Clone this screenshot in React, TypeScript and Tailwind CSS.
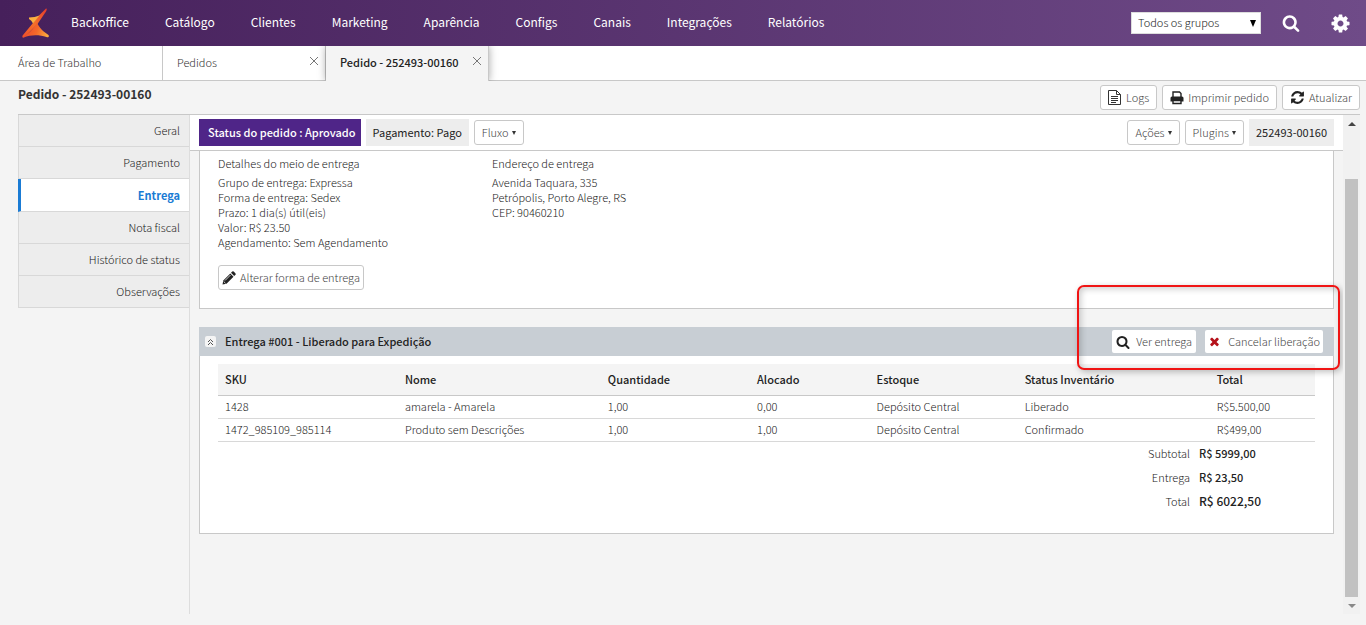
import type { ReactNode } from "react";

const navItems = [
  "Backoffice",
  "Catálogo",
  "Clientes",
  "Marketing",
  "Aparência",
  "Configs",
  "Canais",
  "Integrações",
  "Relatórios"
];

const sections = ["Geral", "Pagamento", "Entrega", "Nota fiscal", "Histórico de status", "Observações"];

const columns = [
  { label: "SKU", width: "w-[16.4%]" },
  { label: "Nome", width: "w-[18.5%]" },
  { label: "Quantidade", width: "w-[13.6%]" },
  { label: "Alocado", width: "w-[10.9%]" },
  { label: "Estoque", width: "w-[13.5%]" },
  { label: "Status Inventário", width: "w-[17.5%]" },
  { label: "Total", width: "" }
];

const rows = [
  ["1428", "amarela - Amarela", "1,00", "0,00", "Depósito Central", "Liberado", "R$5.500,00"],
  ["1472_985109_985114", "Produto sem Descrições", "1,00", "1,00", "Depósito Central", "Confirmado", "R$499,00"]
];

const icons = {
  search:
    "M1216 832q0-185-131.5-316.5t-316.5-131.5-316.5 131.5-131.5 316.5 131.5 316.5 316.5 131.5 316.5-131.5 131.5-316.5zm512 832q0 52-38 90t-90 38q-54 0-90-38l-343-342q-179 124-399 124-143 0-273.5-55.5t-225-150-150-225-55.5-273.5 55.5-273.5 150-225 225-150 273.5-55.5 273.5 55.5 225 150 150 225 55.5 273.5q0 220-124 399l343 343q37 37 37 90z",
  cog: "M1152 896q0-106-75-181t-181-75-181 75-75 181 75 181 181 75 181-75 75-181zm512-109v222q0 12-8 23t-20 13l-185 28q-19 54-39 91 35 50 107 138 10 12 10 25t-9 23q-27 37-99 108t-94 71q-12 0-26-9l-138-108q-44 23-91 38-16 136-29 186-7 28-36 28h-222q-14 0-24.5-8.5t-11.5-21.5l-28-184q-49-16-90-37l-141 107q-10 9-25 9-14 0-25-11-126-114-165-168-7-10-7-23 0-12 8-23 15-21 51-66.5t54-70.5q-27-50-41-99l-183-27q-13-2-21-12.5t-8-23.5v-222q0-12 8-23t19-13l186-28q14-46 39-92-40-57-107-138-10-12-10-24 0-10 9-23 26-36 98.5-107.5t94.5-71.5q13 0 26 10l138 107q44-23 91-38 16-136 29-186 7-28 36-28h222q14 0 24.5 8.5t11.5 21.5l28 184q49 16 90 37l142-107q9-9 24-9 13 0 25 10 129 119 165 170 7 8 7 22 0 12-8 23-15 21-51 66.5t-54 70.5q26 50 41 98l183 28q13 2 21 12.5t8 23.5z",
  times:
    "M1490 1322q0 40-28 68l-136 136q-28 28-68 28t-68-28l-294-294-294 294q-28 28-68 28t-68-28l-136-136q-28-28-28-68t28-68l294-294-294-294q-28-28-28-68t28-68l136-136q28-28 68-28t68 28l294 294 294-294q28-28 68-28t68 28l136 136q28 28 28 68t-28 68l-294 294 294 294q28 28 28 68z",
  refresh:
    "M1639 1056q0 5-1 7-64 268-268 434.5t-478 166.5q-146 0-282.5-55t-243.5-157l-129 129q-19 19-45 19t-45-19-19-45v-448q0-26 19-45t45-19h448q26 0 45 19t19 45-19 45l-137 137q71 66 161 102t187 36q134 0 250-65t186-179q11-17 53-117 8-23 30-23h192q13 0 22.5 9.5t9.5 22.5zm25-800v448q0 26-19 45t-45 19h-448q-26 0-45-19t-19-45 19-45l138-138q-148-137-349-137-134 0-250 65t-186 179q-11 17-53 117-8 23-30 23h-199q-13 0-22.5-9.5t-9.5-22.5v-7q65-268 270-434.5t480-166.5q146 0 284 55.5t245 156.5l130-129q19-19 45-19t45 19 19 45z"
};

function Icon({ name, className }: { name: keyof typeof icons; className: string }) {
  return (
    <svg viewBox="0 0 1792 1792" fill="currentColor" aria-hidden="true" className={className}>
      <path d={icons[name]} />
    </svg>
  );
}

function Logo() {
  return (
    <svg viewBox="0 0 27 30" aria-hidden="true" className="h-[30px] w-[27px]">
      <defs>
        <linearGradient id="arm" x1="1" y1="0" x2="0" y2="1">
          <stop offset="0" stopColor="#e23a2e" />
          <stop offset="0.5" stopColor="#f5702a" />
          <stop offset="1" stopColor="#f04e2a" />
        </linearGradient>
        <linearGradient id="leg" x1="0" y1="0.6" x2="1" y2="0.8">
          <stop offset="0" stopColor="#ee4a2c" />
          <stop offset="0.5" stopColor="#f4682a" />
          <stop offset="1" stopColor="#fbb040" />
        </linearGradient>
      </defs>
      <path d="M24 0.5C25 0 25 2 24 3.500L15.500 16L2 29.500C0.500 30 0 29 0.600 27.500L11 15Q14 11 17 7.500Z" fill="url(#arm)" />
      <path d="M7 9.500Q13 9.500 17.500 7.500L11 15.500Q9.500 12 7 11Z" fill="#fbb040" />
      <path d="M15 14.500C17 20 22 24 26.500 27C27.500 29 26 29.500 24.500 29C17 26.500 9 26.500 1.500 29.500C5 26 12 21 15 14.500Z" fill="url(#leg)" />
    </svg>
  );
}

function PrintIcon() {
  return (
    <svg viewBox="0 0 14 14" aria-hidden="true" className="size-[14px]">
      <path d="M3 6V1H9.500L11 2.500V6" fill="#fff" stroke="#222" strokeWidth="1.400" />
      <path d="M2 5.500H12Q13.500 5.500 13.500 7V10.500H0.500V7Q0.500 5.500 2 5.500Z" fill="#222" />
      <path d="M3 9.500H11V12.500H3Z" fill="#fff" stroke="#222" strokeWidth="1.400" />
    </svg>
  );
}

function LogIcon() {
  return (
    <svg viewBox="0 0 13 15" aria-hidden="true" fill="none" stroke="#333" className="h-[15px] w-[13px]">
      <path d="M0.500 0.500H8.500L12.500 4.500V14.500H0.500ZM8.500 0.500V4.500H12.500M3 6.500H10M3 8.500H10M3 10.500H10M3 12.500H8" />
    </svg>
  );
}

function PencilIcon() {
  return (
    <svg viewBox="0 0 14 14" aria-hidden="true" fill="#222" className="size-[14px]">
      <path d="M0.500 13.500L1.300 9.500L8.300 2.500L11.500 5.700L4.500 12.700Z" />
      <path d="M9 1.800L10.300 0.500Q11 0 11.700 0.600L13.400 2.300Q14 3 13.500 3.700L12.200 5Z" />
      <path d="M3 9.500L8.500 4M1.700 10.500L3.500 12.300" stroke="#fff" strokeWidth="0.800" />
    </svg>
  );
}

function Button({ icon, children, className = "px-[7px]" }: { icon?: ReactNode; children: ReactNode; className?: string }) {
  return (
    <button
      type="button"
      className={`flex h-[25px] items-center rounded-[3px] border border-[#c8c8c8] bg-white whitespace-nowrap text-[#444] ${className}`}
    >
      {icon}
      {children}
    </button>
  );
}

function Caret() {
  return <span className="ml-[3px] h-0 w-0 border-x-[2px] border-t-[4px] border-x-transparent border-t-[#333]" />;
}

function Tab({ label, active = false, closable = true }: { label: string; active?: boolean; closable?: boolean }) {
  return (
    <div
      className={`flex w-[163px] justify-between border-r border-[#c8c8c8] pr-[6px] ${closable ? "pl-[14px]" : "pl-[18px]"} ${
        active
          ? "relative z-10 bg-[#f4f4f4] font-medium text-[#222] shadow-[0_0_8px_rgba(0,0,0,0.35)] [clip-path:inset(0_-10px_0_-10px)]"
          : "border-b bg-white text-[#333]"
      }`}
    >
      <a href="#" className="leading-[32px]">
        {label}
      </a>
      {closable && (
        <button type="button" aria-label={`Fechar ${label}`} className="mt-[10px] h-[10px] w-[10px]">
          <svg viewBox="0 0 10 10" stroke="#777" className="size-[10px]">
            <path d="M1 1L9 9M9 1L1 9" />
          </svg>
        </button>
      )}
    </div>
  );
}

export default function App() {
  return (
    <div className="flex h-screen flex-col bg-[#f4f4f4] font-['Noto_Sans_CJK_SC',sans-serif] text-[11px] leading-[15px] font-light text-[#222]">
      <header className="flex h-[46px] shrink-0 items-center bg-linear-to-r from-[#46205b] to-[#6f4b88] pr-[15px] pl-[22px] text-white">
        <Logo />
        <nav className="ml-[22px] flex flex-1 gap-[36px] pb-[4px] text-[12px] font-normal">
          {navItems.map((item) => (
            <a key={item} href="#">
              {item}
            </a>
          ))}
        </nav>
        <div className="relative">
          <select
            aria-label="Grupo"
            className="block h-[22px] w-[130px] appearance-none rounded-none border border-[#ddd] bg-white pb-[2px] pl-[6px] text-[11px] leading-[18px] text-[#222]"
          >
            <option>Todos os grupos</option>
          </select>
          <span className="pointer-events-none absolute top-2 right-[5px] h-0 w-0 border-x-[3px] border-t-[7px] border-x-transparent border-t-black" />
        </div>
        <button type="button" aria-label="Buscar" className="ml-[21px]">
          <Icon name="search" className="size-[18px]" />
        </button>
        <button type="button" aria-label="Configurações" className="ml-[30px]">
          <Icon name="cog" className="size-[21px]" />
        </button>
      </header>

      <div className="flex h-[35px] shrink-0 bg-white">
        <Tab label="Área de Trabalho" closable={false} />
        <Tab label="Pedidos" />
        <Tab label="Pedido - 252493-00160" active />
        <div className="flex-1 border-b border-[#c8c8c8]" />
      </div>

      <div className="mr-[6px] ml-[18px] flex h-[34px] shrink-0 items-center justify-between border-b border-[#c8c8c8]">
        <h1 className="pb-2 text-[12px] font-semibold text-[#333]">Pedido - 252493-00160</h1>
        <div className="flex gap-[5px]">
          <Button icon={<LogIcon />} className="gap-[5px] px-[7px]">
            Logs
          </Button>
          <Button icon={<PrintIcon />} className="gap-[4px] px-[7px]">
            Imprimir pedido
          </Button>
          <Button icon={<Icon name="refresh" className="size-[15px] text-[#222]" />} className="gap-[4px] px-[7px]">
            Atualizar
          </Button>
        </div>
      </div>

      <main className="mr-[6px] mb-[11px] ml-[18px] flex min-h-0 flex-1">
        <nav className="w-[172px] shrink-0 border-r border-[#ddd]">
          {sections.map((section) => (
            <a
              key={section}
              href="#"
              className={`block border-b border-[#d8d8d8] pr-[9px] text-right ${
                section === "Entrega"
                  ? "h-[33px] border-l-[3px] border-l-[#1a7bd4] bg-white leading-[32px] font-semibold text-[#1a7bd4]"
                  : "h-[32px] border-l border-l-[#d8d8d8] bg-[#ededed] leading-[31px]"
              }`}
            >
              {section}
            </a>
          ))}
        </nav>

        <div className="flex min-w-0 flex-1 flex-col">
          <div className="flex h-9 shrink-0 items-center gap-[5px] border-b border-[#c8c8c8] bg-white px-[9px]">
            <span className="bg-[#4f2588] pr-[5px] pl-[9px] leading-[27px] font-medium text-white">
              Status do pedido : Aprovado
            </span>
            <span className="bg-[#ededed] px-[7px] leading-[27px] font-normal text-[#222]">Pagamento: Pago</span>
            <Button>
              Fluxo <Caret />
            </Button>
            <div className="flex-1" />
            <Button>
              Ações <Caret />
            </Button>
            <Button>
              Plugins <Caret />
            </Button>
            <span className="bg-[#ededed] px-[7px] leading-[27px] font-normal text-[#222]">252493-00160</span>
          </div>

          <div className="min-h-0 flex-1 overflow-hidden px-[9px]">
            <section className="border border-t-0 border-[#c8c8c8] bg-white px-[18px] pt-[5px] pb-[18px]">
              <div className="flex">
                <div className="w-[274px]">
                  <h2 className="mb-1">Detalhes do meio de entrega</h2>
                  <p>Grupo de entrega: Expressa</p>
                  <p>Forma de entrega: Sedex</p>
                  <p>Prazo: 1 dia(s) útil(eis)</p>
                  <p>Valor: R$ 23.50</p>
                  <p>Agendamento: Sem Agendamento</p>
                </div>
                <div>
                  <h2 className="mb-1">Endereço de entrega</h2>
                  <p>Avenida Taquara, 335</p>
                  <p>Petrópolis, Porto Alegre, RS</p>
                  <p>CEP: 90460210</p>
                </div>
              </div>
              <Button icon={<PencilIcon />} className="mt-[15px] gap-[4px] px-[3px]">
                Alterar forma de entrega
              </Button>
            </section>

            <section className="mt-[18px] border border-t-0 border-[#c8c8c8] bg-white pb-[20px]">
              <div className="relative -mx-px flex h-[29px] items-center bg-[#c8ced4] pr-[11px] pl-[6px]">
                <button
                  type="button"
                  aria-label="Recolher entrega"
                  className="flex size-[11px] items-center justify-center rounded-[2px] bg-[#f4f4f4]"
                >
                  <svg viewBox="0 0 7 8" fill="none" stroke="#555" className="h-2 w-[7px]">
                    <path d="M1 4L3.500 1.500L6 4M1 7L3.500 4.500L6 7" />
                  </svg>
                </button>
                <h2 className="ml-[9px] flex-1 font-medium text-[#222]">Entrega #001 - Liberado para Expedição</h2>
                <div className="flex gap-[9px]">
                  <button type="button" className="flex h-[23px] items-center gap-[6px] rounded-[2px] bg-white px-[4px] text-[#444]">
                    <Icon name="search" className="size-[14px] text-[#222]" />
                    Ver entrega
                  </button>
                  <button type="button" className="flex h-[23px] items-center gap-[7px] rounded-[2px] bg-white px-[3px] text-[#444]">
                    <Icon name="times" className="size-[13px] text-[#b5121b]" />
                    Cancelar liberação
                  </button>
                </div>
                {/* highlight around the delivery actions */}
                <div className="pointer-events-none absolute -top-[42px] -right-[6px] -bottom-[14px] w-[263px] rounded-[7px] border-2 border-[#f01414] shadow-[2px_2px_6px_rgba(0,0,0,0.25),inset_2px_2px_6px_rgba(0,0,0,0.2)]" />
              </div>

              <div className="mx-[18px] mt-[8px]">
                <table className="w-full table-fixed border-collapse text-left">
                  <thead>
                    <tr className="h-[31px] border-b border-[#c8c8c8] bg-[#f4f4f4] text-[#222]">
                      {columns.map((column) => (
                        <th key={column.label} className={`px-[7px] font-medium ${column.width}`}>
                          {column.label}
                        </th>
                      ))}
                    </tr>
                  </thead>
                  <tbody>
                    {rows.map((row) => (
                      <tr key={row[0]} className="h-[23px] border-b border-[#d8d8d8]">
                        {row.map((cell, index) => (
                          <td key={columns[index].label} className="px-[7px]">
                            {cell}
                          </td>
                        ))}
                      </tr>
                    ))}
                  </tbody>
                </table>
                <dl className="-mt-px ml-auto grid w-[185px] grid-cols-[60px_1fr] gap-x-[9px] leading-6">
                  <dt className="text-right">Subtotal</dt>
                  <dd className="font-medium">R$ 5999,00</dd>
                  <dt className="text-right">Entrega</dt>
                  <dd className="font-medium">R$ 23,50</dd>
                  <dt className="text-right">Total</dt>
                  <dd className="text-[12px] font-medium">R$ 6022,50</dd>
                </dl>
              </div>
            </section>
          </div>
        </div>

        <div className="flex w-[17px] shrink-0 flex-col items-center bg-[#f1f1f1]">
          <button type="button" aria-label="Rolar para cima" className="flex h-[17px] w-full items-center justify-center">
            <span className="border-x-4 border-b-4 border-x-transparent border-b-[#444]" />
          </button>
          <div className="mt-[47px] w-[13px] flex-1 bg-[#c1c1c1]" />
          <button type="button" aria-label="Rolar para baixo" className="flex h-[17px] w-full items-center justify-center">
            <span className="border-x-4 border-t-4 border-x-transparent border-t-[#888]" />
          </button>
        </div>
      </main>
    </div>
  );
}
